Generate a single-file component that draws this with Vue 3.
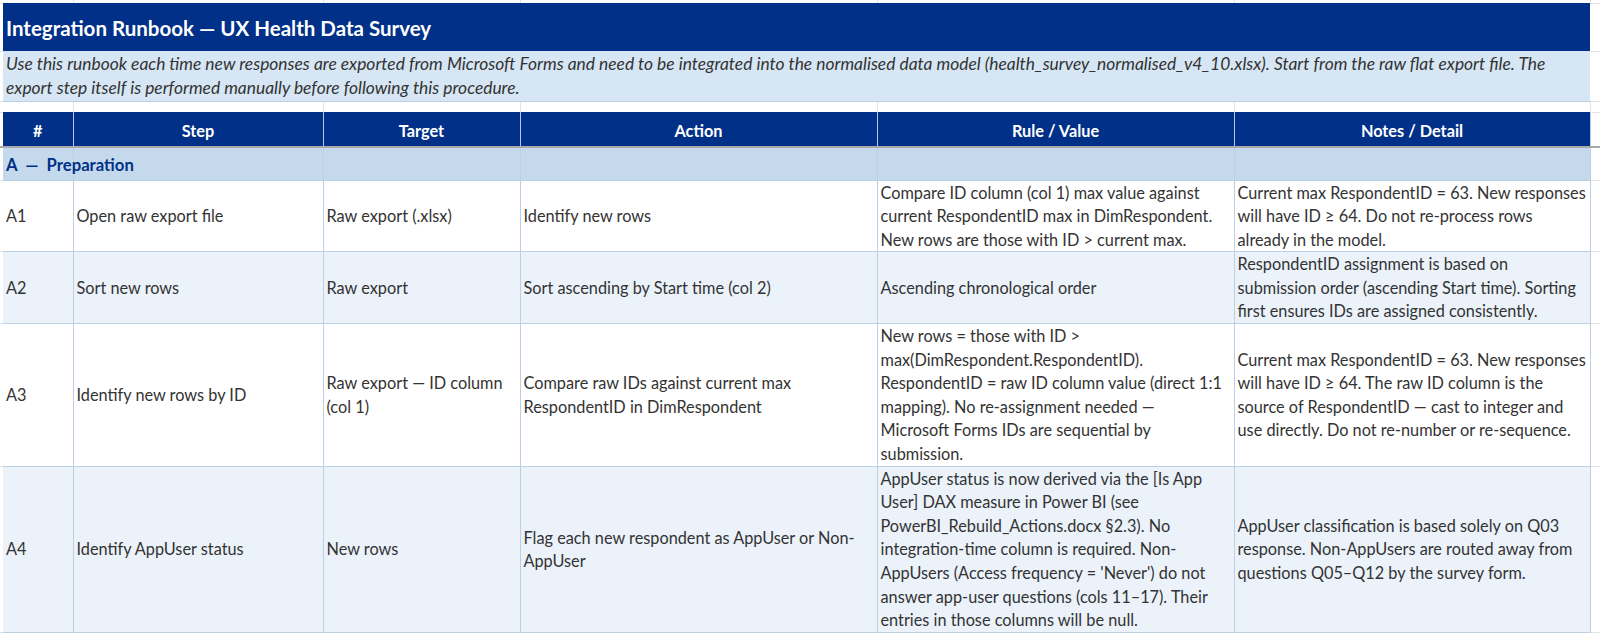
<template>
  <div class="sheet">
    <table class="runbook">
      <colgroup>
        <col class="c-edge" />
        <col class="c-id" />
        <col class="c-step" />
        <col class="c-target" />
        <col class="c-action" />
        <col class="c-rule" />
        <col class="c-notes" />
        <col />
      </colgroup>
      <tbody>
        <tr class="gap-row top-row">
          <td class="margin"></td>
          <td v-for="n in 6" :key="n"></td>
          <td class="margin"></td>
        </tr>
        <tr class="title-row">
          <td class="margin"></td>
          <td colspan="6" class="banner">Integration Runbook — UX Health Data Survey</td>
          <td class="margin"></td>
        </tr>
        <tr class="intro-row">
          <td class="margin"></td>
          <td colspan="6" class="banner">{{ intro }}</td>
          <td class="margin"></td>
        </tr>
        <tr class="gap-row">
          <td class="margin"></td>
          <td v-for="n in 6" :key="n"></td>
          <td class="margin"></td>
        </tr>
        <tr class="head-row">
          <td class="margin"></td>
          <th v-for="h in headers" :key="h">{{ h }}</th>
          <td class="margin"></td>
        </tr>
        <tr class="section-row">
          <td class="margin"></td>
          <td>A &nbsp;—&nbsp; Preparation</td>
          <td v-for="n in 5" :key="n"></td>
          <td class="margin"></td>
        </tr>
        <tr
          v-for="(row, i) in rows"
          :key="row.id"
          class="data-row"
          :class="{ alt: i % 2 === 1 }"
          :style="{ height: row.height + 'px' }"
        >
          <td class="margin"></td>
          <td>{{ row.id }}</td>
          <td>{{ row.step }}</td>
          <td>{{ row.target }}</td>
          <td>{{ row.action }}</td>
          <td>{{ row.rule }}</td>
          <td>{{ row.notes }}</td>
          <td class="margin"></td>
        </tr>
      </tbody>
    </table>
  </div>
</template>

<script setup>
const intro =
  'Use this runbook each time new responses are exported from Microsoft Forms and need to be integrated into the normalised data model (health_survey_normalised_v4_10.xlsx). Start from the raw flat export file. The\nexport step itself is performed manually before following this procedure.'

const headers = ['#', 'Step', 'Target', 'Action', 'Rule / Value', 'Notes / Detail']

const rows = [
  {
    id: 'A1',
    height: 71,
    step: 'Open raw export file',
    target: 'Raw export (.xlsx)',
    action: 'Identify new rows',
    rule: 'Compare ID column (col 1) max value against\ncurrent RespondentID max in DimRespondent.\nNew rows are those with ID > current max.',
    notes: 'Current max RespondentID = 63. New responses\nwill have ID ≥ 64. Do not re-process rows\nalready in the model.'
  },
  {
    id: 'A2',
    height: 71,
    step: 'Sort new rows',
    target: 'Raw export',
    action: 'Sort ascending by Start time (col 2)',
    rule: 'Ascending chronological order',
    notes: 'RespondentID assignment is based on\nsubmission order (ascending Start time). Sorting\nfirst ensures IDs are assigned consistently.'
  },
  {
    id: 'A3',
    height: 142,
    step: 'Identify new rows by ID',
    target: 'Raw export — ID column\n(col 1)',
    action: 'Compare raw IDs against current max\nRespondentID in DimRespondent',
    rule: 'New rows = those with ID >\nmax(DimRespondent.RespondentID).\nRespondentID = raw ID column value (direct 1:1\nmapping). No re-assignment needed —\nMicrosoft Forms IDs are sequential by\nsubmission.',
    notes: 'Current max RespondentID = 63. New responses\nwill have ID ≥ 64. The raw ID column is the\nsource of RespondentID — cast to integer and\nuse directly. Do not re-number or re-sequence.'
  },
  {
    id: 'A4',
    height: 166,
    step: 'Identify AppUser status',
    target: 'New rows',
    action: 'Flag each new respondent as AppUser or Non-\nAppUser',
    rule: "AppUser status is now derived via the [Is App\nUser] DAX measure in Power BI (see\nPowerBI_Rebuild_Actions.docx §2.3). No\nintegration-time column is required. Non-\nAppUsers (Access frequency = 'Never') do not\nanswer app-user questions (cols 11–17). Their\nentries in those columns will be null.",
    notes: 'AppUser classification is based solely on Q03\nresponse. Non-AppUsers are routed away from\nquestions Q05–Q12 by the survey form.'
  }
]
</script>

<style>
html,
body {
  background: #ffffff;
}
</style>

<style scoped>
.sheet {
  height: 635px;
  overflow: hidden;
  font-family: Lato, "Open Sans", sans-serif;
  font-size: 16.3px;
  color: #333333;
}

.runbook {
  width: 1600px;
  table-layout: fixed;
  border-collapse: collapse;
}

.c-edge {
  width: 3px;
}

.c-id {
  width: 70px;
}

.c-step {
  width: 250px;
}

.c-target {
  width: 197px;
}

.c-action {
  width: 357px;
}

.c-rule {
  width: 357px;
}

.c-notes {
  width: 356px;
}

td,
th {
  padding: 0 3px;
  vertical-align: middle;
  white-space: pre-line;
  line-height: 23.6px;
}

td.margin {
  padding: 0;
  border-bottom: 1px solid #e3e3e3;
  background: #ffffff;
}

.title-row {
  height: 48px;
}

.title-row .banner {
  padding-top: 3px;
  background: #003087;
  color: #ffffff;
  font-size: 20.5px;
  font-weight: 700;
}

.intro-row {
  height: 50px;
}

.intro-row .banner {
  background: #d6e6f4;
  border-bottom: 1px solid #bcd0e5;
  font-size: 17.4px;
  font-style: italic;
}

.gap-row {
  height: 11px;
}

.top-row {
  height: 3px;
}

.gap-row td:not(.margin) {
  border-right: 1px solid #e3e3e3;
}

.head-row {
  height: 35px;
}

.head-row th {
  padding-top: 3px;
  background: #003087;
  color: #ffffff;
  font-weight: 700;
  text-align: center;
  border-right: 1px solid #b7c9e2;
  border-bottom: 2px solid #a9a9a9;
}

.head-row td.margin {
  border-bottom: 2px solid #a9a9a9;
}

.section-row {
  height: 33px;
}

.section-row td:not(.margin) {
  padding-top: 4px;
  background: #c5d9ed;
  border-right: 1px solid #bcd0e5;
  border-bottom: 1px solid #bcd0e5;
  color: #003087;
  font-size: 16.7px;
  font-weight: 700;
  white-space: nowrap;
}

.data-row td:not(.margin) {
  background: #ffffff;
  border-right: 1px solid #bcd0e5;
  border-bottom: 1px solid #bcd0e5;
}

.data-row.alt td:not(.margin) {
  background: #ebf2fa;
}
</style>
